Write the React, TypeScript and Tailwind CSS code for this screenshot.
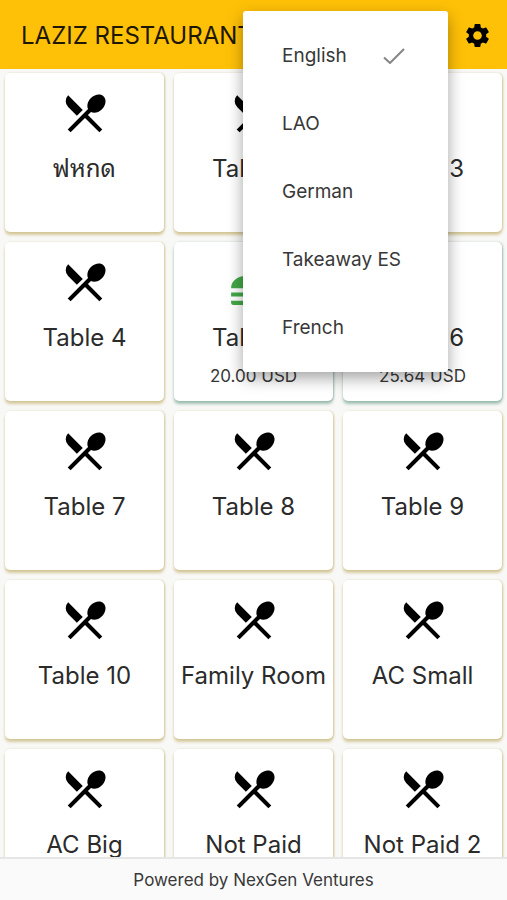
import { MdFastfood, MdRestaurantMenu, MdSettings } from "react-icons/md";

type Table = { name: string; total?: string };

const tables: Table[] = [
  { name: "ฟหกด" },
  { name: "Table 2" },
  { name: "Table 3" },
  { name: "Table 4" },
  { name: "Table 5", total: "20.00 USD" },
  { name: "Table 6", total: "25.64 USD" },
  { name: "Table 7" },
  { name: "Table 8" },
  { name: "Table 9" },
  { name: "Table 10" },
  { name: "Family Room" },
  { name: "AC Small" },
  { name: "AC Big" },
  { name: "Not Paid" },
  { name: "Not Paid 2" },
];

const languages = ["English", "LAO", "German", "Takeaway ES", "French"];

function CheckIcon() {
  return (
    <svg viewBox="0 0 22 16" fill="none" aria-hidden="true" className="mr-1 h-4 w-[22px] text-[#858585]">
      <path d="M1 9.5 7 15 21 1" stroke="currentColor" strokeWidth="2" />
    </svg>
  );
}

function TableCard({ name, total }: Table) {
  const shadow = total
    ? "shadow-[0_3px_3px_rgba(40,115,85,0.4),1px_0_2px_rgba(40,115,85,0.3)]"
    : "shadow-[0_3px_3px_rgba(165,135,30,0.4),1px_0_2px_rgba(165,135,30,0.3)]";
  return (
    <button
      type="button"
      className={`flex h-[159px] min-w-0 flex-col items-center rounded-[5px] bg-white pt-[15px] ${shadow}`}
    >
      {total ? (
        <MdFastfood className="size-[50px] shrink-0 text-[#43a847]" />
      ) : (
        <MdRestaurantMenu className="size-[50px] shrink-0 text-black" />
      )}
      <span className="mt-[15px] text-2xl whitespace-nowrap text-[#2b2b2b]">{name}</span>
      {total && <span className="mt-[10px] text-[17px] text-[#383838]">{total}</span>}
    </button>
  );
}

function LanguageMenu() {
  return (
    <div
      role="menu"
      aria-label="Language"
      className="absolute top-[11px] right-[59px] w-[205px] rounded-[3px] bg-white pt-[11px] pb-[10px] shadow-[0_6px_16px_rgba(0,0,0,0.36)]"
    >
      {languages.map((language, index) => (
        <button
          key={language}
          type="button"
          role="menuitemradio"
          aria-checked={index === 0}
          className="flex h-[68px] w-full items-center justify-between px-[39px] text-left text-[19px] whitespace-nowrap text-[#383838]"
        >
          {language}
          {index === 0 && <CheckIcon />}
        </button>
      ))}
    </div>
  );
}

export default function App() {
  return (
    <div className="relative flex h-screen flex-col bg-[#f8f8f6] font-['Inter','Noto_Sans_Thai_Looped','Loma','Noto_Sans',sans-serif]">
      <header className="flex h-[69px] shrink-0 items-center justify-between bg-[#ffc107] pt-[2px] pr-[15px] pl-[21px]">
        <h1 className="text-2xl whitespace-nowrap text-[#1d1703]">LAZIZ RESTAURANT</h1>
        <button type="button" aria-label="Settings">
          <MdSettings className="size-[29px] text-black" />
        </button>
      </header>
      <main className="grid min-h-0 flex-1 grid-cols-3 content-start gap-[10px] overflow-y-auto px-[5px] pt-1 [scrollbar-width:none]">
        {tables.map((table) => (
          <TableCard key={table.name} {...table} />
        ))}
      </main>
      <footer className="flex h-[43px] shrink-0 items-center justify-center border-t-2 border-[#e6e6e6] bg-[#fafafa] pt-[2px] text-[17px] text-[#383838]">
        Powered by NexGen Ventures
      </footer>
      <LanguageMenu />
    </div>
  );
}
